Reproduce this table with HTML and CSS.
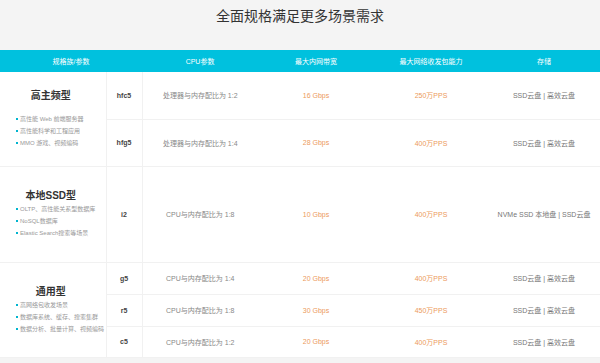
FILE: index.html
```html
<!DOCTYPE html>
<html lang="zh-CN">
<head>
    <meta charset="UTF-8">
    <meta name="viewport" content="width=device-width, initial-scale=1.0">
    <title>全面规格满足更多场景需求</title>
    <link rel="stylesheet" href="styles.css">
</head>
<body>
<section class="specs">
    <h2 class="specs-title">全面规格满足更多场景需求</h2>
    <table class="spec-table">
        <colgroup>
            <col class="c-family">
            <col class="c-type">
            <col class="c-cpu">
            <col class="c-bw">
            <col class="c-pps">
            <col class="c-disk">
        </colgroup>
        <thead>
        <tr>
            <th colspan="2">规格族/参数</th>
            <th>CPU参数</th>
            <th>最大内网带宽</th>
            <th>最大网络收发包能力</th>
            <th>存储</th>
        </tr>
        </thead>
        <tbody>
        <tr class="row-48">
            <td class="family" rowspan="2">
                <div class="family-name family-name--gap">高主频型</div>
                <ul class="scenes">
                    <li>高性能 Web 前端服务器</li>
                    <li>高性能科学和工程应用</li>
                    <li>MMO 游戏、视频编码</li>
                </ul>
            </td>
            <td class="type">hfc5</td>
            <td class="cpu">处理器与内存配比为 1:2</td>
            <td class="num">16 Gbps</td>
            <td class="num">250万PPS</td>
            <td class="disk">SSD云盘 | 高效云盘</td>
        </tr>
        <tr class="row-48 group-end">
            <td class="type">hfg5</td>
            <td class="cpu">处理器与内存配比为 1:4</td>
            <td class="num">28 Gbps</td>
            <td class="num">400万PPS</td>
            <td class="disk">SSD云盘 | 高效云盘</td>
        </tr>
        <tr class="row-96 group-end">
            <td class="family">
                <div class="family-name">本地SSD型</div>
                <ul class="scenes">
                    <li>OLTP、高性能关系型数据库</li>
                    <li>NoSQL数据库</li>
                    <li>Elastic Search搜索等场景</li>
                </ul>
            </td>
            <td class="type">i2</td>
            <td class="cpu">CPU与内存配比为 1:8</td>
            <td class="num">10 Gbps</td>
            <td class="num">400万PPS</td>
            <td class="disk">NVMe SSD 本地盘 | SSD云盘</td>
        </tr>
        <tr class="row-32">
            <td class="family" rowspan="3">
                <div class="family-name">通用型</div>
                <ul class="scenes">
                    <li>高网络包收发场景</li>
                    <li>数据库系统、缓存、搜索集群</li>
                    <li>数据分析、批量计算、视频编码</li>
                </ul>
            </td>
            <td class="type">g5</td>
            <td class="cpu">CPU与内存配比为 1:4</td>
            <td class="num">20 Gbps</td>
            <td class="num">400万PPS</td>
            <td class="disk">SSD云盘 | 高效云盘</td>
        </tr>
        <tr class="row-32">
            <td class="type">r5</td>
            <td class="cpu">CPU与内存配比为 1:8</td>
            <td class="num">30 Gbps</td>
            <td class="num">450万PPS</td>
            <td class="disk">SSD云盘 | 高效云盘</td>
        </tr>
        <tr class="row-31 group-end">
            <td class="type">c5</td>
            <td class="cpu">CPU与内存配比为 1:2</td>
            <td class="num">20 Gbps</td>
            <td class="num">400万PPS</td>
            <td class="disk">SSD云盘 | 高效云盘</td>
        </tr>
        </tbody>
    </table>
</section>
</body>
</html>
```

FILE: styles.css
```css
html, body {
    margin: 0;
}

body {
    background-color: #f4f4f4;
    font-family: 'Liberation Sans', 'Noto Sans CJK SC', sans-serif;
    color: #666;
}

.specs-title {
    margin: 0;
    padding: 8px 0 0;
    height: 42px;
    font-size: 14px;
    line-height: 16px;
    font-weight: normal;
    text-align: center;
    color: #333;
}

.spec-table {
    width: 600px;
    table-layout: fixed;
    border-collapse: collapse;
    border-spacing: 0;
    background-color: #fff;
    font-size: 7px;
}

.c-family { width: 106px; }
.c-type { width: 36px; }
.c-cpu { width: 116px; }
.c-bw { width: 116px; }
.c-pps { width: 114px; }

.spec-table th {
    height: 22px;
    padding: 0;
    background-color: #00c1de;
    color: #fff;
    font-weight: normal;
    text-align: center;
}

.spec-table td {
    padding: 0;
    text-align: center;
    white-space: nowrap;
    border-bottom: 1px solid #f1f1f1;
}

.row-48 { height: 47px; }
.row-96 { height: 96px; }
.row-32 { height: 32px; }
.row-31 { height: 31px; }

.spec-table td.family {
    padding: 0 20px 0 16px;
    text-align: left;
    border-right: 1px solid #f1f1f1;
    overflow: visible;
}

.spec-table td.type {
    font-weight: bold;
    color: #444;
    border-right: 1px solid #f1f1f1;
}

.spec-table td.cpu {
    color: #888;
}

.spec-table td.num {
    color: #ec9a5c;
}

.spec-table td.disk {
    color: #777;
}

.family-name {
    font-size: 10px;
    line-height: 14px;
    font-weight: bold;
    color: #333;
    text-align: center;
}

.family-name--gap {
    margin-bottom: 10px;
}

.scenes {
    list-style-type: none;
    margin: 0;
    padding: 0;
    font-size: 6px;
    line-height: 12px;
    color: #999;
}

.scenes li::before {
    content: '';
    display: inline-block;
    width: 2px;
    height: 2px;
    margin: 0 2px 1px 0;
    background-color: #00b4cf;
}
```
